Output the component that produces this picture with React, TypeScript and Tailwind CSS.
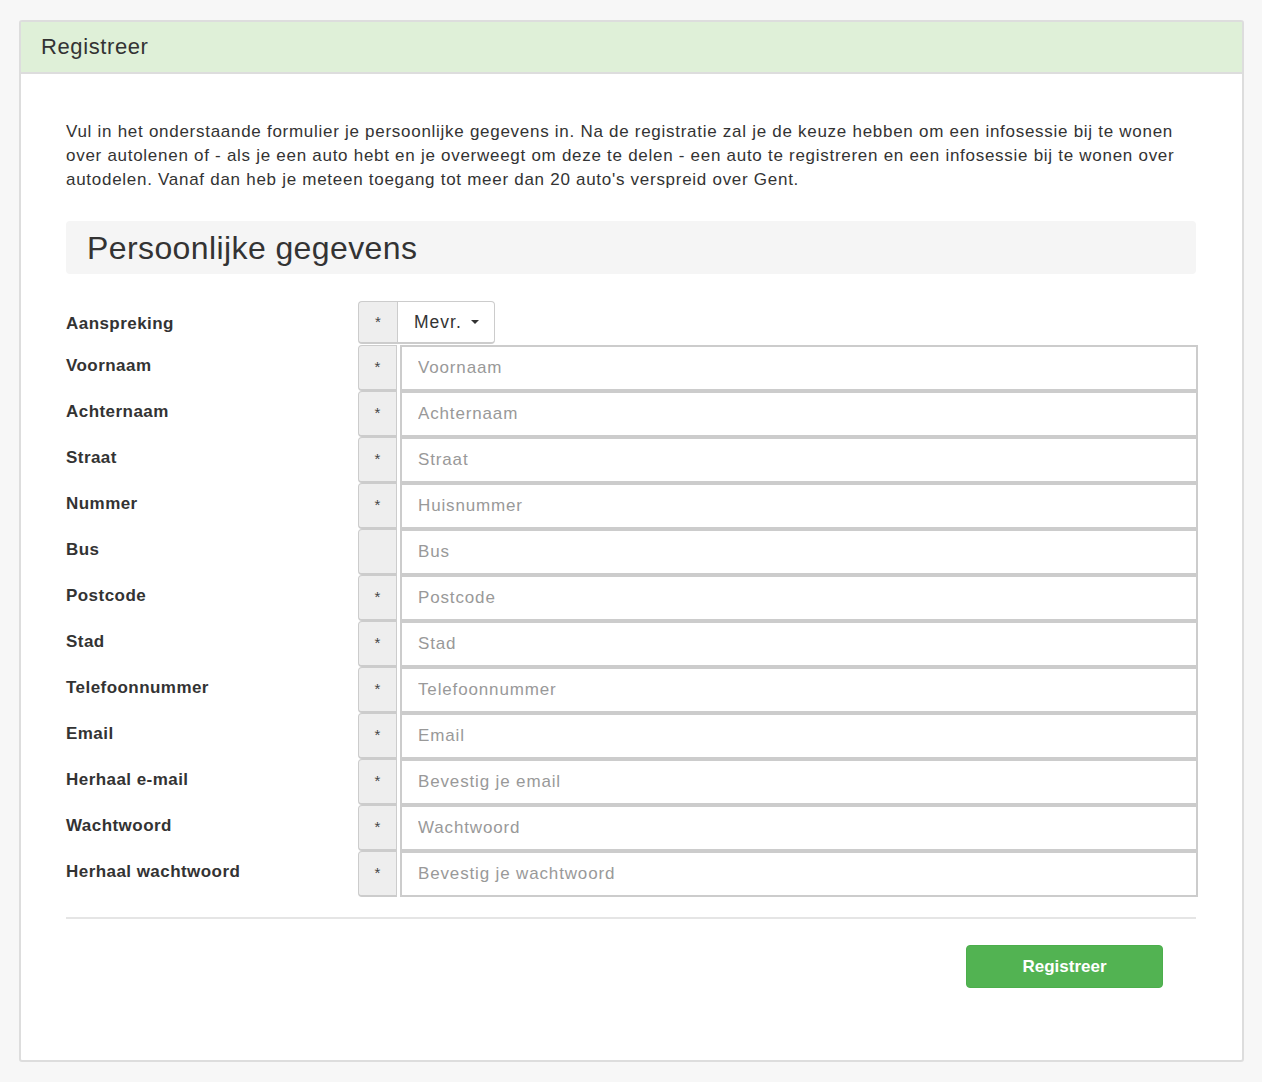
import React from "react";

const fields = [
  { label: "Voornaam", placeholder: "Voornaam", required: true },
  { label: "Achternaam", placeholder: "Achternaam", required: true },
  { label: "Straat", placeholder: "Straat", required: true },
  { label: "Nummer", placeholder: "Huisnummer", required: true },
  { label: "Bus", placeholder: "Bus", required: false },
  { label: "Postcode", placeholder: "Postcode", required: true },
  { label: "Stad", placeholder: "Stad", required: true },
  { label: "Telefoonnummer", placeholder: "Telefoonnummer", required: true },
  { label: "Email", placeholder: "Email", required: true },
  { label: "Herhaal e-mail", placeholder: "Bevestig je email", required: true },
  { label: "Wachtwoord", placeholder: "Wachtwoord", required: true },
  {
    label: "Herhaal wachtwoord",
    placeholder: "Bevestig je wachtwoord",
    required: true,
  },
];

const Addon = ({ required, className }: { required: boolean; className?: string }) => (
  <div
    className={
      "w-[39px] shrink-0 flex items-center justify-center bg-[#eeeeee] border border-[#cccccc] border-b-2 rounded-l-[4px] text-[15px] text-[#444] " +
      (className ?? "")
    }
  >
    {required ? "*" : ""}
  </div>
);

const FieldRow = ({
  label,
  placeholder,
  required,
}: {
  label: string;
  placeholder: string;
  required: boolean;
}) => (
  <div className="flex h-[46px]">
    <label className="w-[292px] shrink-0 flex items-center pb-[4px] font-bold text-[17px] tracking-[0.45px] text-[#333]">
      {label}
    </label>
    <div className="flex flex-1 -mr-[2px]">
      <Addon required={required} />
      <input
        type="text"
        placeholder={placeholder}
        className="ml-[3px] flex-1 h-[46px] border-2 border-[#cccccc] px-[16px] text-[17px] tracking-[0.85px] text-[#333] placeholder:text-[#999] outline-none bg-white"
      />
    </div>
  </div>
);

export default function App() {
  return (
    <div
      className="min-h-[1082px] bg-[#f7f7f7] pt-[20px] pl-[19px] pr-[18px]"
      style={{ fontFamily: '"Liberation Sans", Arial, sans-serif' }}
    >
      <div className="w-[1225px] h-[1042px] bg-white border-2 border-[#dddddd] rounded-[3px] flex flex-col">
        <div className="h-[52px] bg-[#dff0d8] border-b-2 border-[#dddddd] flex items-center px-[20px]">
          <h1 className="text-[22px] tracking-[0.6px] text-[#333] leading-none">Registreer</h1>
        </div>
        <div className="pl-[45px] pr-[46px] pt-[46px]">
          <p className="text-[17px] tracking-[0.72px] leading-[24px] text-[#333]">
            Vul in het onderstaande formulier je persoonlijke gegevens in. Na de registratie zal je
            de keuze hebben om een infosessie bij te wonen over autolenen of - als je een auto hebt
            en je overweegt om deze te delen - een auto te registreren en een infosessie bij te
            wonen over autodelen. Vanaf dan heb je meteen toegang tot meer dan 20 auto's verspreid
            over Gent.
          </p>
          <div className="mt-[29px] h-[53px] bg-[#f5f5f5] rounded-[4px] flex items-center px-[21px]">
            <h2 className="text-[32px] tracking-[0.4px] text-[#333] leading-none">
              Persoonlijke gegevens
            </h2>
          </div>

          <form className="mt-[27px]">
            <div className="flex h-[44px]">
              <label className="w-[292px] shrink-0 flex items-center pt-[1px] font-bold text-[17px] tracking-[0.45px] text-[#333]">
                Aanspreking
              </label>
              <div className="flex">
                <Addon required={true} className="h-[43px] border-b border-r-0" />
                <button
                  type="button"
                  className="h-[43px] w-[98px] border border-[#cccccc] border-b-2 rounded-r-[4px] bg-white flex items-center pl-[16px] gap-[9px] text-[17.5px] tracking-[1px] text-[#333]"
                >
                  Mevr.
                  <span className="w-0 h-0 border-l-[4px] border-r-[4px] border-t-[4px] border-l-transparent border-r-transparent border-t-[#333]" />
                </button>
              </div>
            </div>
            {fields.map((f) => (
              <FieldRow key={f.label} {...f} />
            ))}

            <div className="mt-[20px] h-[2px] bg-[#e5e5e5]" />
            <div className="flex justify-end pr-[33px] mt-[26px]">
              <button
                type="button"
                className="w-[197px] h-[43px] bg-[#52b352] border border-[#4cae4c] rounded-[4px] text-white font-bold text-[17px]"
              >
                Registreer
              </button>
            </div>
          </form>
        </div>
      </div>
    </div>
  );
}
